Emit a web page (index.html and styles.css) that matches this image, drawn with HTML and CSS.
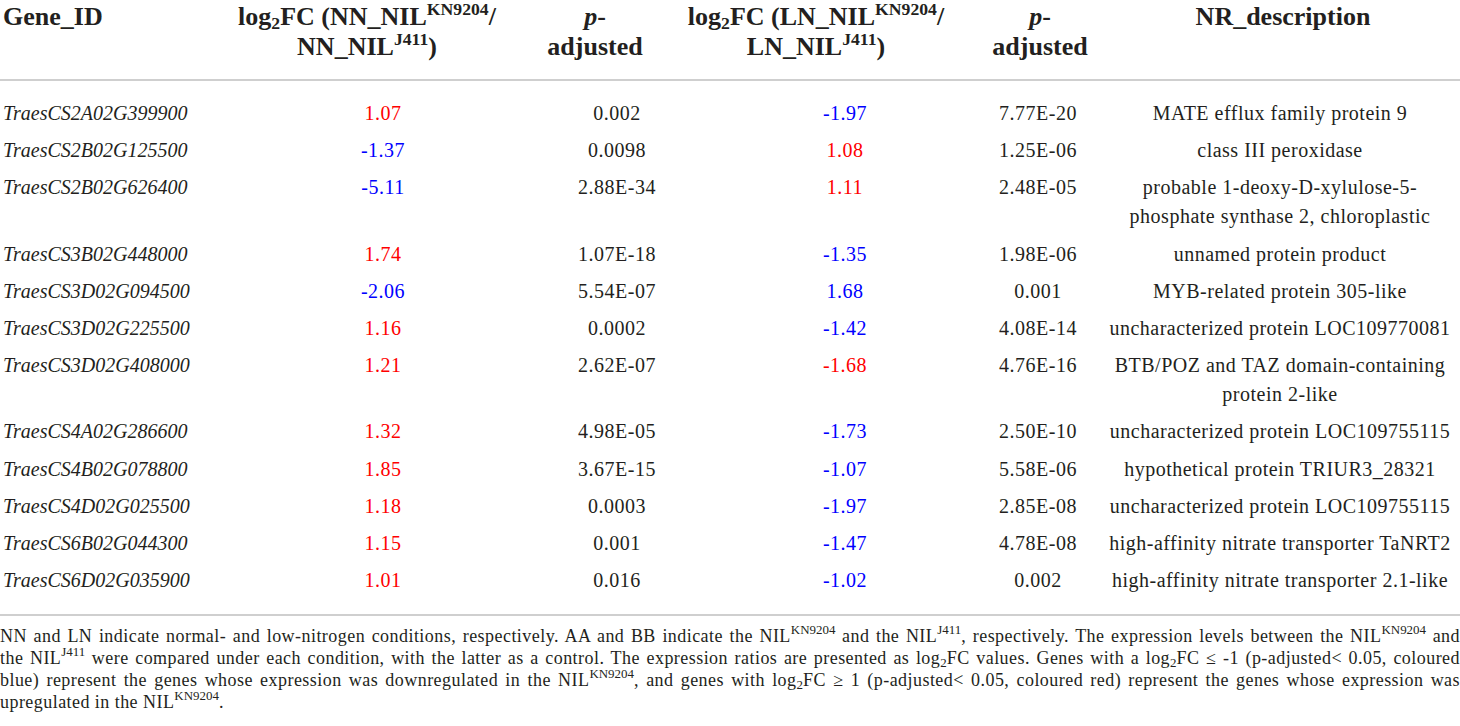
FILE: index.html
```html
<!DOCTYPE html>
<html lang="en">
<head>
<meta charset="utf-8">
<title>Differentially expressed genes</title>
<link rel="stylesheet" href="styles.css">
</head>
<body>
<div class="page">
  <div class="thead">
    <div class="th th-gene"><span>Gene_ID</span></div>
    <div class="th"><span>log<sub>2</sub>FC (NN_NIL<sup>KN9204</sup>/<br>NN_NIL<sup>J411</sup>)</span></div>
    <div class="th"><span><i>p</i>-<br>adjusted</span></div>
    <div class="th"><span>log<sub>2</sub>FC (LN_NIL<sup>KN9204</sup>/<br>LN_NIL<sup>J411</sup>)</span></div>
    <div class="th"><span><i>p</i>-<br>adjusted</span></div>
    <div class="th"><span>NR_description</span></div>
  </div>
  <div class="tbody">
    <div class="row"><div class="c gene">TraesCS2A02G399900</div><div class="c up">1.07</div><div class="c">0.002</div><div class="c down">-1.97</div><div class="c">7.77E-20</div><div class="c desc">MATE efflux family protein 9</div></div>
    <div class="row"><div class="c gene">TraesCS2B02G125500</div><div class="c down">-1.37</div><div class="c">0.0098</div><div class="c up">1.08</div><div class="c">1.25E-06</div><div class="c desc">class III peroxidase</div></div>
    <div class="row"><div class="c gene">TraesCS2B02G626400</div><div class="c down">-5.11</div><div class="c">2.88E-34</div><div class="c up">1.11</div><div class="c">2.48E-05</div><div class="c desc">probable 1-deoxy-D-xylulose-5-<br>phosphate synthase 2, chloroplastic</div></div>
    <div class="row"><div class="c gene">TraesCS3B02G448000</div><div class="c up">1.74</div><div class="c">1.07E-18</div><div class="c down">-1.35</div><div class="c">1.98E-06</div><div class="c desc">unnamed protein product</div></div>
    <div class="row"><div class="c gene">TraesCS3D02G094500</div><div class="c down">-2.06</div><div class="c">5.54E-07</div><div class="c down">1.68</div><div class="c">0.001</div><div class="c desc">MYB-related protein 305-like</div></div>
    <div class="row"><div class="c gene">TraesCS3D02G225500</div><div class="c up">1.16</div><div class="c">0.0002</div><div class="c down">-1.42</div><div class="c">4.08E-14</div><div class="c desc">uncharacterized protein LOC109770081</div></div>
    <div class="row"><div class="c gene">TraesCS3D02G408000</div><div class="c up">1.21</div><div class="c">2.62E-07</div><div class="c up">-1.68</div><div class="c">4.76E-16</div><div class="c desc">BTB/POZ and TAZ domain-containing<br>protein 2-like</div></div>
    <div class="row"><div class="c gene">TraesCS4A02G286600</div><div class="c up">1.32</div><div class="c">4.98E-05</div><div class="c down">-1.73</div><div class="c">2.50E-10</div><div class="c desc">uncharacterized protein LOC109755115</div></div>
    <div class="row"><div class="c gene">TraesCS4B02G078800</div><div class="c up">1.85</div><div class="c">3.67E-15</div><div class="c down">-1.07</div><div class="c">5.58E-06</div><div class="c desc">hypothetical protein TRIUR3_28321</div></div>
    <div class="row"><div class="c gene">TraesCS4D02G025500</div><div class="c up">1.18</div><div class="c">0.0003</div><div class="c down">-1.97</div><div class="c">2.85E-08</div><div class="c desc">uncharacterized protein LOC109755115</div></div>
    <div class="row"><div class="c gene">TraesCS6B02G044300</div><div class="c up">1.15</div><div class="c">0.001</div><div class="c down">-1.47</div><div class="c">4.78E-08</div><div class="c desc">high-affinity nitrate transporter TaNRT2</div></div>
    <div class="row"><div class="c gene">TraesCS6D02G035900</div><div class="c up">1.01</div><div class="c">0.016</div><div class="c down">-1.02</div><div class="c">0.002</div><div class="c desc">high-affinity nitrate transporter 2.1-like</div></div>
  </div>
  <div class="note">
    <span class="ln">NN and LN indicate normal- and low-nitrogen conditions, respectively. AA and BB indicate the NIL<sup>KN9204</sup> and the NIL<sup>J411</sup>, respectively. The expression levels between the NIL<sup>KN9204</sup> and</span>
    <span class="ln">the NIL<sup>J411</sup> were compared under each condition, with the latter as a control. The expression ratios are presented as log<sub>2</sub>FC values. Genes with a log<sub>2</sub>FC ≤ -1 (p-adjusted&lt; 0.05, coloured</span>
    <span class="ln">blue) represent the genes whose expression was downregulated in the NIL<sup>KN9204</sup>, and genes with log<sub>2</sub>FC ≥ 1 (p-adjusted&lt; 0.05, coloured red) represent the genes whose expression was</span>
    <span class="ln last">upregulated in the NIL<sup>KN9204</sup>.</span>
  </div>
</div>
</body>
</html>
```

FILE: styles.css
```css
html, body {
  margin: 0;
  padding: 0;
  background: #ffffff;
}

.page {
  width: 1460px;
  color: #231f20;
  font-family: "Liberation Serif", "Times New Roman", serif;
}

sup {
  font-size: 0.68em;
  line-height: 0;
  vertical-align: 0.58em;
}

sub {
  font-size: 0.68em;
  line-height: 0;
  vertical-align: -0.22em;
}

/* header */
.thead {
  display: grid;
  grid-template-columns: 234px 266px 190px 252px 196px 290px;
  padding: 2px 0 17px;
  border-bottom: 2px solid #cfcfcf;
  font-size: 26px;
  font-weight: bold;
  line-height: 30px;
}

.th {
  display: flex;
  justify-content: center;
}

.th span {
  white-space: nowrap;
  text-align: center;
}

.th-gene {
  justify-content: flex-start;
  padding-left: 3px;
}

/* body */
.tbody {
  padding: 14px 0 15px;
  border-bottom: 2px solid #cfcfcf;
}

.row {
  display: grid;
  grid-template-columns: 250px 266px 202px 254px 132px 356px;
  padding: 4.1px 0;
  font-size: 20px;
  line-height: 29px;
}

.c {
  display: flex;
  justify-content: center;
  text-align: center;
  white-space: nowrap;
  letter-spacing: 0.5px;
}

.c.gene {
  justify-content: flex-start;
  padding-left: 3px;
  font-style: italic;
  letter-spacing: 0;
}

.c.desc {
  padding-right: 4px;
}

.up {
  color: #ff0000;
}

.down {
  color: #0000ff;
}

/* footnote */
.note {
  padding-top: 9px;
  font-size: 18px;
  line-height: 22px;
  letter-spacing: 0.45px;
}

.note sup,
.note sub {
  font-size: 0.72em;
  letter-spacing: 0;
}

.ln {
  display: block;
  text-align: justify;
  text-align-last: justify;
  white-space: nowrap;
}

.ln.last {
  text-align-last: left;
}
```
